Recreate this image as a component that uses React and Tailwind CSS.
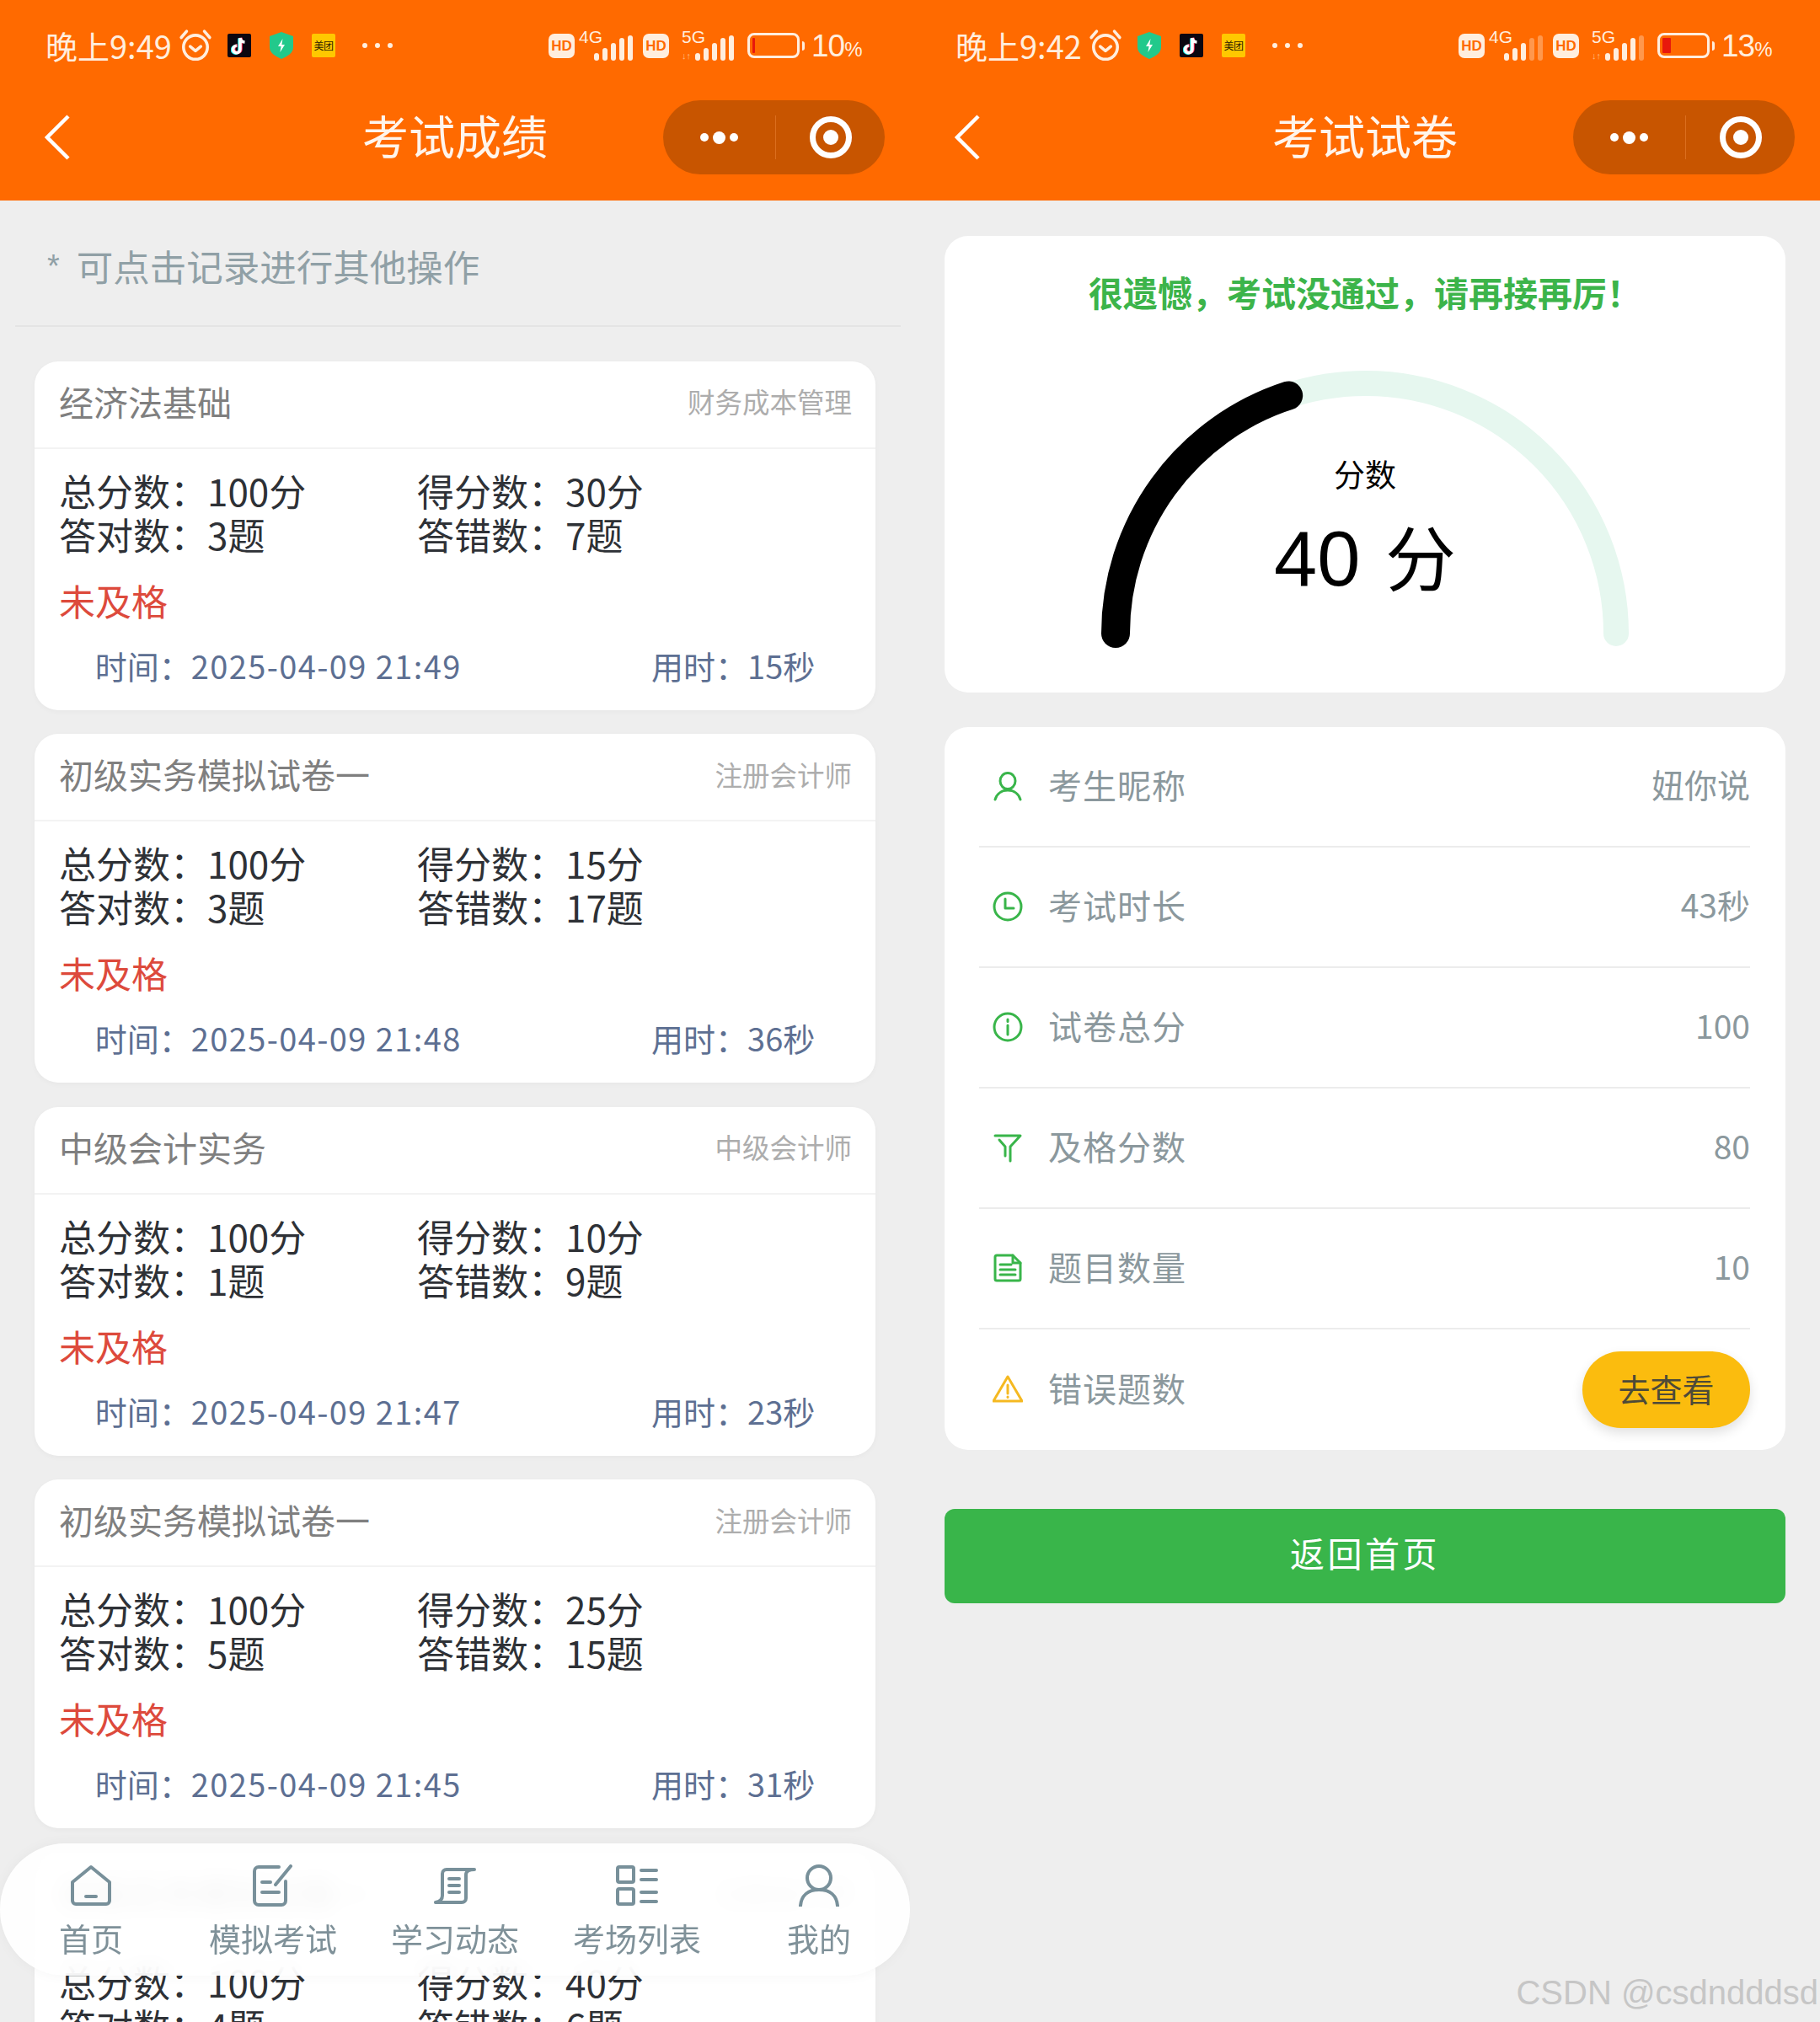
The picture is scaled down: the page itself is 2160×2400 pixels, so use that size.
import React from "react";

const records = [
  { title: "经济法基础", tag: "财务成本管理", total: "100分", score: "30分", right: "3题", wrong: "7题", time: "2025-04-09 21:49", used: "15秒" },
  { title: "初级实务模拟试卷一", tag: "注册会计师", total: "100分", score: "15分", right: "3题", wrong: "17题", time: "2025-04-09 21:48", used: "36秒" },
  { title: "中级会计实务", tag: "中级会计师", total: "100分", score: "10分", right: "1题", wrong: "9题", time: "2025-04-09 21:47", used: "23秒" },
  { title: "初级实务模拟试卷一", tag: "注册会计师", total: "100分", score: "25分", right: "5题", wrong: "15题", time: "2025-04-09 21:45", used: "31秒" },
  { title: "初级实务模拟试卷一", tag: "注册会计师", total: "100分", score: "40分", right: "4题", wrong: "6题", time: "2025-04-09 21:44", used: "28秒" },
];

function Alarm() {
  return (
    <svg width="40" height="40" viewBox="0 0 38 38" fill="none" stroke="#ffeede" strokeWidth="3.4" strokeLinecap="round" strokeLinejoin="round">
      <circle cx="19" cy="21" r="13.5" />
      <path d="M13 20l6 5 6-5" />
      <path d="M3 10 9 3M35 10 29 3" />
    </svg>
  );
}

function TikTok() {
  return (
    <div className="w-[28px] h-[28px] rounded-[2px] bg-[#0b0710] flex items-center justify-center">
      <svg width="20" height="24" viewBox="0 0 20 24" fill="none" strokeWidth="3.6">
        <path d="M11 3v13.5a4.2 4.2 0 1 1-4.2-4.2" stroke="#25f4ee" transform="translate(-1 .6)" />
        <path d="M11 3v13.5a4.2 4.2 0 1 1-4.2-4.2" stroke="#fe2c55" transform="translate(1 -.2)" />
        <path d="M11 3v13.5a4.2 4.2 0 1 1-4.2-4.2M11 3c.5 3 2.5 4.8 5.5 5" stroke="#ffffff" />
      </svg>
    </div>
  );
}

function Shield() {
  return (
    <svg width="28" height="32" viewBox="0 0 28 32">
      <path d="M14 0 28 5v13c0 7-7 11-14 14C7 29 0 25 0 18V5z" fill="#22c98b" />
      <path d="M15.5 8 10 17h3.6l-1.2 7L18 15h-3.6z" fill="#ffffff" />
    </svg>
  );
}

function Meituan() {
  return (
    <div className="w-[28px] h-[28px] rounded-[2px] bg-[#ffc800] flex items-center justify-center text-[12px] leading-none text-[#2b2000] tracking-[-0.5px] whitespace-nowrap">
      美团
    </div>
  );
}

function Signal({ faded }) {
  const heights = [9, 15, 21, 27, 30];
  return (
    <div className="flex items-end gap-[4px] h-[30px]">
      {heights.map((h, i) => (
        <span
          key={i}
          className="w-[6px] rounded-full bg-[#ffeede]"
          style={{ height: h, opacity: i >= 5 - faded ? 0.35 : 1 }}
        />
      ))}
    </div>
  );
}

function Hd() {
  return (
    <div className="w-[31px] h-[29px] rounded-[7px] bg-[#ffeede] flex items-center justify-center text-[17px] font-bold text-[#ff6a00] leading-none font-['Liberation_Sans',sans-serif]">
      HD
    </div>
  );
}

function StatusBar({ time, shieldFirst, level, percent, faded }) {
  return (
    <div className="h-[108px] pl-[54px] pr-[59px] flex items-center justify-between text-[#ffeede]">
      <div className="flex items-center">
        <span className="text-[38px] leading-none w-[158px] whitespace-nowrap font-['Noto_Sans_CJK_SC',sans-serif]">{time}</span>
        <Alarm />
        <div className="flex items-center gap-[22px] ml-[18px]">
          {shieldFirst ? <Shield /> : <TikTok />}
          {shieldFirst ? <TikTok /> : <Shield />}
          <Meituan />
        </div>
        <div className="flex gap-[9px] ml-[32px]">
          <span className="w-[6px] h-[6px] rounded-full bg-[#ffeede]" />
          <span className="w-[6px] h-[6px] rounded-full bg-[#ffeede]" />
          <span className="w-[6px] h-[6px] rounded-full bg-[#ffeede]" />
        </div>
      </div>
      <div className="flex items-center">
        <Hd />
        <div className="relative w-[64px] h-[36px] ml-[5px]">
          <span className="absolute left-0 -top-[3px] text-[21px] leading-none font-['Liberation_Sans',sans-serif]">4G</span>
          <div className="absolute right-0 bottom-0"><Signal faded={faded} /></div>
        </div>
        <div className="ml-[12px]"><Hd /></div>
        <div className="relative w-[62px] h-[36px] ml-[15px]">
          <span className="absolute left-0 -top-[3px] text-[21px] leading-none font-['Liberation_Sans',sans-serif]">5G</span>
          <span className="absolute left-0 bottom-0 text-[11px] leading-none opacity-60 font-['Liberation_Sans',sans-serif]">↓↑</span>
          <div className="absolute right-0 bottom-0"><Signal faded={faded - 1 < 0 ? 0 : faded - 1} /></div>
        </div>
        <div className="ml-[16px] flex items-center">
          <div className="w-[62px] h-[30px] rounded-[8px] border-[3px] border-[#ffeede] p-[3px] flex">
            <span className="h-full rounded-[1px] bg-[#e8180c]" style={{ width: level }} />
          </div>
          <span className="w-[3px] h-[11px] ml-[3px] bg-[#ffeede] rounded-r-full" />
        </div>
        <div className="ml-[8px] w-[58px] flex items-baseline whitespace-nowrap font-['Liberation_Sans',sans-serif]">
          <span className="text-[37px] leading-none tracking-[-1px]">{percent}</span>
          <span className="text-[24px] leading-none">%</span>
        </div>
      </div>
    </div>
  );
}

function Header({ title, ...status }) {
  return (
    <header className="h-[238px] bg-[#ff6a00]">
      <StatusBar {...status} />
      <div className="relative h-[130px] flex items-center justify-center">
        <svg className="absolute left-[53px] top-[28px]" width="30" height="54" viewBox="0 0 30 54" fill="none" stroke="#ffffff" strokeWidth="4.5">
          <path d="M28 2 3 27l25 25" />
        </svg>
        <span className="text-[55px] leading-none text-[#fff5ec] font-normal -mt-[27px]">{title}</span>
        <div className="absolute left-[787px] top-[11px] w-[263px] h-[88px] rounded-full bg-[#c85500] flex items-center">
          <div className="flex-1 flex items-center justify-center gap-[5px]">
            <span className="w-[10px] h-[10px] rounded-full bg-white" />
            <span className="w-[15px] h-[15px] rounded-full bg-white" />
            <span className="w-[10px] h-[10px] rounded-full bg-white" />
          </div>
          <span className="w-[1px] h-[52px] bg-[#dc6f1e]" />
          <div className="w-[129px] flex items-center justify-center">
            <div className="w-[50px] h-[50px] rounded-full border-[7px] border-white flex items-center justify-center">
              <span className="w-[18px] h-[18px] rounded-full bg-white" />
            </div>
          </div>
        </div>
      </div>
    </header>
  );
}

function RecordCard({ r }) {
  return (
    <div className="h-[414px] shrink-0 bg-white rounded-[28px] shadow-[0_2px_6px_rgba(0,0,0,0.03)]">
      <div className="h-[104px] pl-[29px] pr-[28px] pb-[6px] flex items-center justify-between border-b-[2px] border-[#f3f3f3]">
        <span className="text-[41px] text-[#7f7f7f]">{r.title}</span>
        <span className="text-[32.5px] text-[#adadad]">{r.tag}</span>
      </div>
      <div className="pl-[29px] pt-[23px] text-[44px] leading-[52px] text-[#2e3136]">
        <div className="flex">
          <span className="w-[425px]">总分数：{r.total}</span>
          <span>得分数：{r.score}</span>
        </div>
        <div className="flex">
          <span className="w-[425px]">答对数：{r.right}</span>
          <span>答错数：{r.wrong}</span>
        </div>
      </div>
      <div className="pl-[29px] mt-[22px] h-[60px] text-[43px] leading-[60px] text-[#dd4a3c]">未及格</div>
      <div className="mt-[25px] h-[46px] -mx-[41px] flex justify-around text-[38px] leading-[46px] text-[#5d6f92]">
        <span>时间：<span className="tracking-[1.4px]">{r.time}</span></span>
        <span>用时：{r.used}</span>
      </div>
    </div>
  );
}

const navItems = [
  {
    label: "首页",
    icon: (
      <>
        <path d="M25 3 47 21v22a4 4 0 0 1-4 4H7a4 4 0 0 1-4-4V21z" />
        <path d="M19 38h12" />
      </>
    ),
  },
  {
    label: "模拟考试",
    icon: (
      <>
        <path d="M32 3H8a5 5 0 0 0-5 5v35a5 5 0 0 0 5 5h27a5 5 0 0 0 5-5V20" />
        <path d="M28 24 46 2M12 21h10M12 33h20" />
      </>
    ),
  },
  {
    label: "学习动态",
    icon: (
      <>
        <path d="M48 6H15c-3 0-5 2-5 5v26c0 4-3 7-8 8h31c3 0 5-2 5-5V12c0-3 3-6 10-6z" />
        <path d="M18 17h12M18 25h12M18 33h12" />
      </>
    ),
  },
  {
    label: "考场列表",
    icon: (
      <>
        <rect x="2" y="3" width="19" height="18" rx="2" />
        <rect x="2" y="29" width="19" height="18" rx="2" />
        <path d="M30 7h18M30 18h18M30 33h18M30 44h18" />
      </>
    ),
  },
  {
    label: "我的",
    icon: (
      <>
        <ellipse cx="25" cy="16" rx="14" ry="14" />
        <path d="M3 49c1-12 9-19 22-19s21 7 22 19" />
      </>
    ),
  },
];

function BottomNav() {
  return (
    <nav className="absolute left-0 top-[2188px] w-[1080px] h-[157px] rounded-[78px] bg-white/90 backdrop-blur-md shadow-[0_0_16px_rgba(0,0,0,0.04)] grid grid-cols-5 pt-[25px]">
      {navItems.map((item) => (
        <div key={item.label} className="flex flex-col items-center">
          <svg width="50" height="50" viewBox="0 0 50 50" fill="none" stroke="#78909a" strokeWidth="4" strokeLinecap="round" strokeLinejoin="round">
            {item.icon}
          </svg>
          <span className="mt-[14px] text-[38px] leading-[46px] text-[#7f9199]">{item.label}</span>
        </div>
      ))}
    </nav>
  );
}

const rows = [
  {
    label: "考生昵称",
    value: "妞你说",
    icon: (
      <>
        <ellipse cx="18" cy="12" rx="9" ry="9.5" />
        <path d="M3 34c2-7 8-11 15-11s13 4 15 11" />
      </>
    ),
  },
  {
    label: "考试时长",
    value: "43秒",
    icon: (
      <>
        <circle cx="18" cy="18" r="16" />
        <path d="M15 9v11h10" />
      </>
    ),
  },
  {
    label: "试卷总分",
    value: "100",
    icon: (
      <>
        <circle cx="18" cy="18" r="16" />
        <path d="M18 16v11M18 9v2.5" />
      </>
    ),
  },
  {
    label: "及格分数",
    value: "80",
    icon: <path d="M3 4h30L21 17v17M15 28V17L8 9" />,
  },
  {
    label: "题目数量",
    value: "10",
    icon: (
      <>
        <path d="M5 3h19l9 9v19a2 2 0 0 1-2 2H5a2 2 0 0 1-2-2V5a2 2 0 0 1 2-2z" />
        <path d="M24 3v9h9M9 14h13M9 20h18M9 26h18" />
      </>
    ),
  },
];

function InfoRow({ icon, label, color, last, children }) {
  return (
    <div className={`h-[143px] pl-[16px] flex items-center justify-between ${last ? "" : "border-b-[2px] border-[#ececec]"}`}>
      <div className="flex items-center gap-[30px]">
        <svg className="-mt-[2px]" width="36" height="36" viewBox="0 0 36 36" fill="none" stroke={color} strokeWidth="3" strokeLinecap="round" strokeLinejoin="round">
          {icon}
        </svg>
        <span className="text-[40px] tracking-[1px] pb-[6px] text-[#8b989d]">{label}</span>
      </div>
      {children}
    </div>
  );
}

function Gauge() {
  return (
    <div className="relative mx-auto mt-[51px] w-[660px] h-[360px]">
      <svg width="660" height="360" viewBox="0 0 660 360" fill="none" strokeLinecap="round">
        <path d="M34 325A297 297 0 0 1 628 325" stroke="#e6f7ef" strokeWidth="30" />
        <path d="M34 325A297 297 0 0 1 239.2 42.5" stroke="#000000" strokeWidth="34" />
      </svg>
      <div className="absolute inset-0 flex flex-col items-center pt-[110px] text-black">
        <span className="text-[37px] leading-[50px]">分数</span>
        <span className="mt-[21px] text-[92px] leading-[110px] whitespace-nowrap font-['Liberation_Sans','Noto_Sans_CJK_SC',sans-serif]">
          40 <span className="ml-[4px] text-[84px]">分</span>
        </span>
      </div>
    </div>
  );
}

export default function App() {
  return (
    <div className="relative w-[2160px] h-[2400px] overflow-hidden flex bg-[#eeeeee] font-['Noto_Sans_CJK_SC',sans-serif]">
      <section className="relative w-[1080px] h-[2400px] overflow-hidden">
        <Header title="考试成绩" time="晚上9:49" level={3} percent="10" faded={0} />
        <div className="h-[150px] ml-[18px] mr-[11px] pl-[38px] pt-[8px] flex items-center border-b-[2px] border-[#e4e4e4] text-[43.5px] text-[#90a0a6]">
          <span className="mr-[20px] text-[38px] text-[#90a0a6] font-['Liberation_Sans',sans-serif]">*</span>
          可点击记录进行其他操作
        </div>
        <div className="mt-[40.5px] mx-[41px] flex flex-col gap-[28.5px]">
          {records.map((r, i) => (
            <RecordCard key={i} r={r} />
          ))}
        </div>
        <BottomNav />
      </section>

      <section className="relative w-[1080px] h-[2400px] overflow-hidden">
        <Header title="考试试卷" time="晚上9:42" shieldFirst level={10} percent="13" faded={2} />
        <div className="mx-[41px] mt-[42px]">
          <div className="h-[542px] bg-white rounded-[28px] pt-[36px]">
            <div className="h-[60px] mb-[3px] text-center text-[41px] leading-[60px] font-bold text-[#3cb44a]">很遗憾，考试没通过，请再接再厉！</div>
            <Gauge />
          </div>

          <div className="mt-[41px] h-[858px] bg-white rounded-[28px] pl-[41px] pr-[42px]">
            {rows.map((row) => (
              <InfoRow key={row.label} icon={row.icon} label={row.label} color="#39b54a">
                <span className="text-[39px] pb-[6px] text-[#8b989d]">{row.value}</span>
              </InfoRow>
            ))}
            <InfoRow
              last
              label="错误题数"
              color="#f5b921"
              icon={
                <>
                  <path d="M18 3 35 32H1z" />
                  <path d="M18 13v10M18 27v.5" />
                </>
              }
            >
              <button className="w-[199px] h-[91px] pb-[4px] rounded-full bg-[#fbbc0e] text-[38px] text-[#4d4a38] shadow-[0_6px_14px_rgba(0,0,0,0.12)]">去查看</button>
            </InfoRow>
          </div>

          <button className="mt-[70px] w-full h-[112px] pb-[8px] rounded-[12px] bg-[#39b54a] text-[41px] tracking-[3.5px] text-white">返回首页</button>
        </div>
        <div className="absolute right-[2px] top-[2340px] text-[40px] leading-[50px] text-[#c6c6c6] whitespace-nowrap font-['Liberation_Sans',sans-serif]">CSDN @csdndddsd</div>
      </section>
    </div>
  );
}
